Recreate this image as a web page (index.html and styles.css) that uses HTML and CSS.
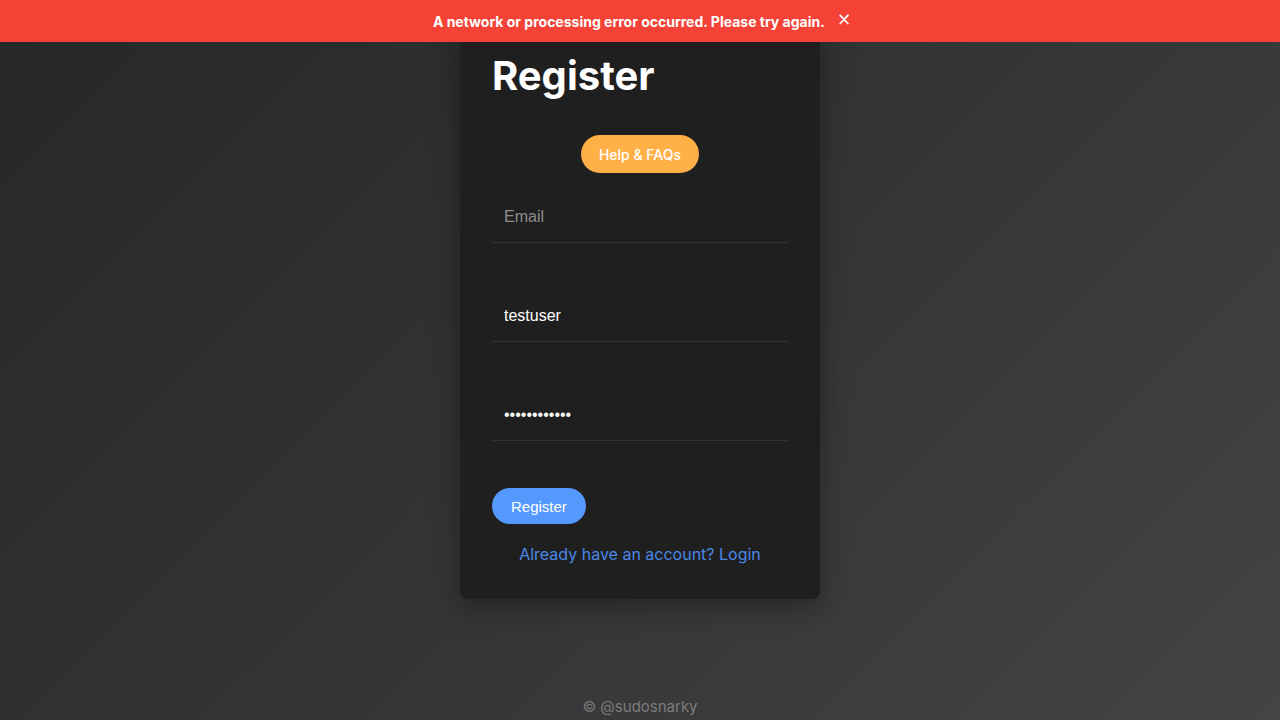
FILE: index.html
```html
<!DOCTYPE html>
<html lang="en">
<head>
<meta charset="utf-8">
<title>Register</title>
<link rel="stylesheet" href="styles.css">
</head>
<body>
<div class="banner">
  <span class="banner-text">A network or processing error occurred. Please try again.</span>
  <button class="banner-close" aria-label="Close">×</button>
</div>
<main class="main">
  <div class="card">
    <h1 class="title">Register</h1>
    <div class="help-row"><button class="help-btn">Help &amp; FAQs</button></div>
    <form class="form">
      <div class="field"><input class="input" type="email" placeholder="Email"></div>
      <div class="field"><input class="input" type="text" value="testuser"></div>
      <div class="field"><input class="input" type="password" value="testpassword"></div>
      <button class="submit" type="button">Register</button>
    </form>
    <a class="login-link" href="#">Already have an account? Login</a>
  </div>
</main>
<footer class="footer">© @sudosnarky</footer>
</body>
</html>
```

FILE: styles.css
```css
* { box-sizing: border-box; }
html, body { margin: 0; padding: 0; }
body {
  height: 720px;
  overflow: hidden;
  display: flex;
  flex-direction: column;
  background: linear-gradient(135deg, #262729 0%, #333436 50%, #444445 100%);
  font-family: Inter, "Noto Sans", sans-serif;
  color: #fff;
}
.banner {
  position: fixed;
  top: 0; left: 0; right: 0;
  height: 42px;
  background: #f44336;
  display: flex;
  align-items: center;
  justify-content: center;
  gap: 12px;
  z-index: 10;
}
.banner-text {
  font-family: Inter, sans-serif;
  font-weight: 700;
  font-size: 14px;
  color: #fff;
  margin-left: 4px;
}
.banner-close {
  background: none;
  border: none;
  color: #fff;
  font-size: 17px;
  line-height: 1;
  padding: 0;
  margin-top: -3px;
  font-family: "DejaVu Sans", sans-serif;
  cursor: pointer;
}
.main {
  display: flex;
  justify-content: center;
  padding-top: 20px;
}
.card {
  width: 360px;
  background: #1f1f1f;
  border-radius: 8px;
  padding: 32px 32px 33px;
  box-shadow: 0 8px 28px rgba(0,0,0,0.35);
  display: flex;
  flex-direction: column;
}
.title {
  margin: 0;
  font-size: 40px;
  line-height: 48px;
  font-weight: 700;
  color: #fff;
  font-family: Inter, sans-serif;
}
.help-row {
  display: flex;
  justify-content: center;
  margin-top: 35px;
}
.help-btn {
  height: 38px;
  padding: 0 18px;
  border: none;
  border-radius: 19px;
  background: #ffb047;
  color: #fff;
  font-family: Inter, sans-serif;
  font-weight: 500;
  font-size: 14px;
  cursor: pointer;
}
.form {
  display: flex;
  flex-direction: column;
  align-items: flex-start;
  margin-top: 19px;
}
.field {
  width: 100%;
  margin-bottom: 48px;
}
.input {
  width: 100%;
  height: 51px;
  background: transparent;
  border: none;
  border-bottom: 1px solid #323232;
  padding: 0 12px;
  color: #fff;
  font-family: "Liberation Sans", Arial, sans-serif;
  font-size: 16px;
  outline: none;
}
.input::placeholder { color: #8d8d8d; }
.submit {
  height: 36px;
  padding: 0 19px;
  margin-top: -1px;
  border: none;
  border-radius: 18px;
  background: #5599ff;
  color: #fff;
  font-family: "Liberation Sans", Arial, sans-serif;
  font-size: 15px;
  cursor: pointer;
}
.login-link {
  margin-top: 18px;
  text-align: center;
  line-height: 24px;
  font-size: 16px;
  color: #4a88e6;
  text-decoration: none;
  font-family: Inter, sans-serif;
}
.footer {
  margin-top: auto;
  text-align: center;
  line-height: 24px;
  padding-bottom: 1px;
  font-size: 15px;
  color: #7c7c7c;
  font-family: Inter, sans-serif;
}
```
